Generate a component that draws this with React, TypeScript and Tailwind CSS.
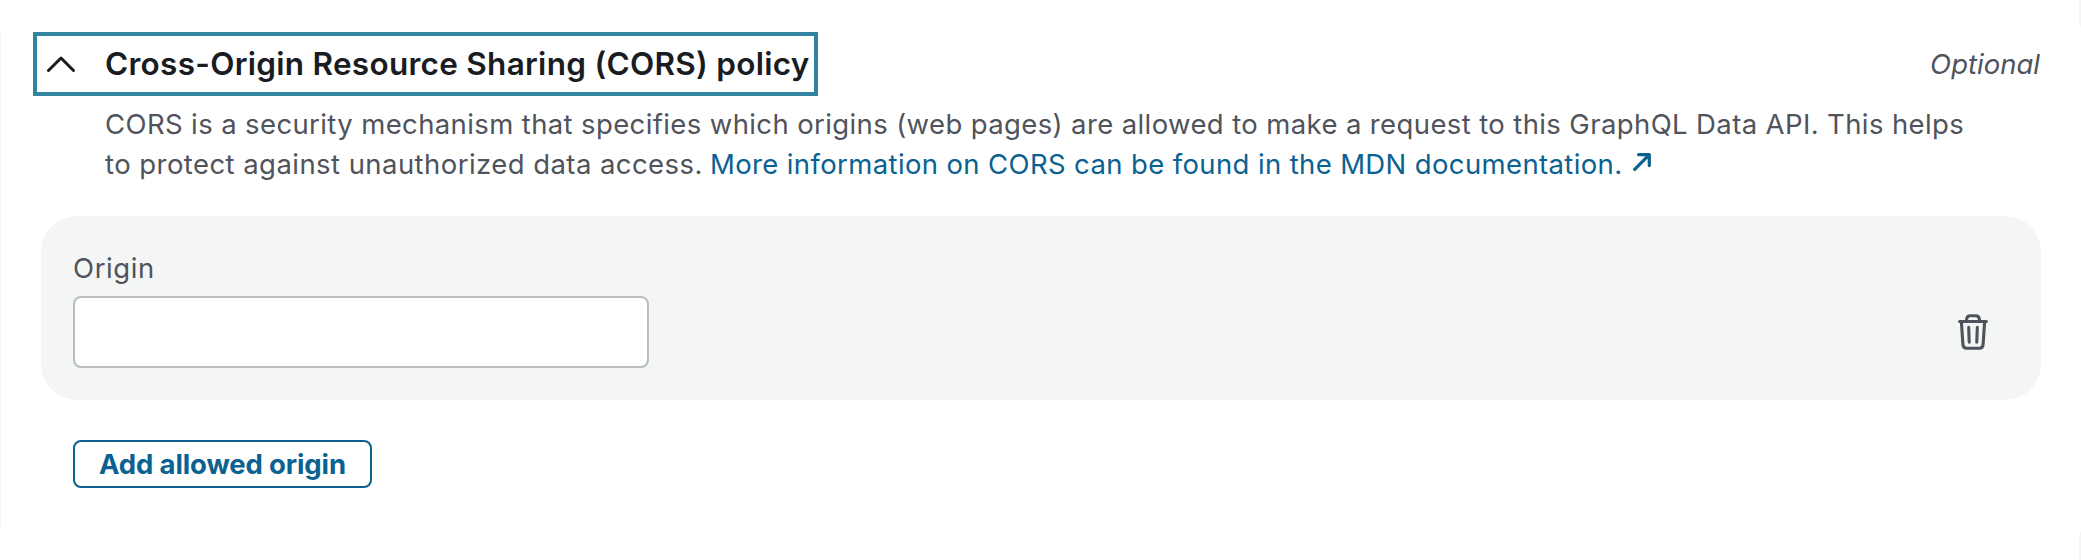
export default function App() {
  return (
    <main className="relative h-[560px] w-[2081px] overflow-hidden bg-white pt-8 font-['Inter',sans-serif] text-[27.5px] text-[#50535b]">
      <span className="absolute -top-2 left-[2079px] h-[38px] w-10 rounded-bl-lg bg-[#f4f5f6]" />
      <span className="absolute top-[528px] left-[2079px] h-10 w-10 rounded-tl-lg bg-[#f4f5f6]" />
      <section className="h-[495px] border-l border-[#f4f5f6] pr-10 pl-8">
        <header className="flex items-center justify-between">
          <button className="flex h-16 w-[785px] items-center border-4 border-[#31859f] pl-[10px]">
            <svg className="h-[16px] w-[28px] shrink-0" viewBox="0 0 28 16" fill="none" stroke="#1a1c1f" strokeWidth="3" strokeLinecap="round" strokeLinejoin="round">
              <path d="M1.5 14.5 14 2 26.5 14.5" />
            </svg>
            <span className="ml-[30px] text-[31.5px] font-semibold tracking-[0.28px] whitespace-nowrap text-[#1a1c1f]">Cross-Origin Resource Sharing (CORS) policy</span>
          </button>
          <span className="mr-px pt-[2px] italic">Optional</span>
        </header>
        <div className="mt-2 ml-[72px] leading-10 whitespace-nowrap">
          <p className="tracking-[0.38px]">CORS is a security mechanism that specifies which origins (web pages) are allowed to make a request to this GraphQL Data API. This helps</p>
          <div className="flex">
            <span className="w-[605px] tracking-[0.44px]">to protect against unauthorized data access.</span>
            <a className="flex items-start tracking-[0.37px] text-[#0b6190]">
              More information on CORS can be found in the MDN documentation.
              <svg className="mt-[9px] ml-[10px] h-[18px] w-[18px]" viewBox="0 0 18 18" fill="none" stroke="currentColor" strokeWidth="3.2" strokeLinecap="round" strokeLinejoin="round">
                <path d="M1.7 16.3 16.3 1.7M5.6 1.7h10.7v10.9" />
              </svg>
            </a>
          </div>
        </div>
        <div className="mt-8 ml-2 flex h-[184px] w-[2000px] items-start justify-between rounded-[36px] bg-[#f4f6f6] pt-8 pr-[53px] pl-8">
          <label className="block">
            <span className="block leading-10 tracking-[0.6px]">Origin</span>
            <input className="mt-2 block h-[72px] w-[576px] rounded-lg border-2 border-[#b9bec2] bg-white" />
          </label>
          <button className="mt-[66px]" aria-label="Delete">
            <svg className="h-9 w-[30px]" viewBox="0 0 30 36" fill="none" stroke="#50535b" strokeWidth="3.1" strokeLinecap="round" strokeLinejoin="round">
              <path d="M1.6 7.5h26.8M8.6 7V5.4Q8.9 1.7 12.2 1.7h5.6q3.3 0 3.6 3.7V7" />
              <path d="M3.4 7.8 4.9 30.4q.3 3.9 3.8 3.9h12.6q3.5 0 3.8-3.9L26.6 7.8M10.7 13.4l.5 14.9M19.3 13.4l-.5 14.9" />
            </svg>
          </button>
        </div>
        <button className="mt-10 ml-10 flex h-12 w-[299px] items-center justify-center rounded-lg border-2 border-[#0b6190] pt-[2px] font-bold tracking-[-0.14px] text-[#0b6190]">Add allowed origin</button>
      </section>
    </main>
  );
}
